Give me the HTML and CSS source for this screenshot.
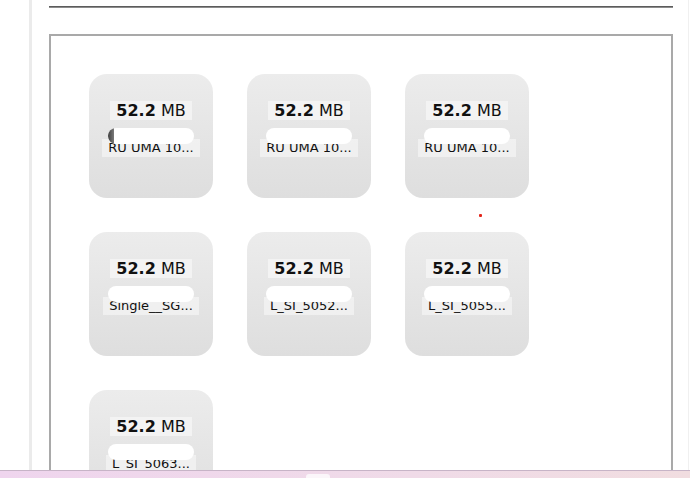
FILE: index.html
```html
<!DOCTYPE html>
<html lang="en">
<head>
  <meta charset="UTF-8">
  <title>Uploads</title>
  <meta name="viewport" content="width=device-width, initial-scale=1.0">
  <link rel="stylesheet" href="styles.css">
</head>
<body>

  <div class="page">
    <hr class="rule">

    <!-- Upload queue -->
    <div class="files">
      <div class="grid">
        <div class="tile">
          <span class="size"><b>52.2</b> MB</span>
          <div class="bar"><div class="fill" style="width: 6px"></div></div>
          <span class="name">RU UMA 10...</span>
        </div>
        <div class="tile">
          <span class="size"><b>52.2</b> MB</span>
          <div class="bar"><div class="fill" style="width: 0"></div></div>
          <span class="name">RU UMA 10...</span>
        </div>
        <div class="tile">
          <span class="size"><b>52.2</b> MB</span>
          <div class="bar"><div class="fill" style="width: 0"></div></div>
          <span class="name">RU UMA 10...</span>
        </div>
        <div class="tile">
          <span class="size"><b>52.2</b> MB</span>
          <div class="bar"><div class="fill" style="width: 0"></div></div>
          <span class="name">Single__SG...</span>
        </div>
        <div class="tile">
          <span class="size"><b>52.2</b> MB</span>
          <div class="bar"><div class="fill" style="width: 0"></div></div>
          <span class="name">L_SI_5052...</span>
        </div>
        <div class="tile">
          <span class="size"><b>52.2</b> MB</span>
          <div class="bar"><div class="fill" style="width: 0"></div></div>
          <span class="name">L_SI_5055...</span>
        </div>
        <div class="tile">
          <span class="size"><b>52.2</b> MB</span>
          <div class="bar"><div class="fill" style="width: 0"></div></div>
          <span class="name">L_SI_5063...</span>
        </div>
      </div>
    </div>
  </div>

  <span class="dot"></span>

  <!-- Taskbar -->
  <div class="taskbar"><span class="tab"></span></div>

</body>
</html>
```

FILE: styles.css
```css
body {
  margin: 0;
  padding: 0;
  font-family: "DejaVu Sans", Verdana, sans-serif;
  background: #fff;
  color: #111;
  overflow: hidden;
  height: 478px;
}

.page {
  margin: 0 1px 0 29px;
  padding: 6px 15px 0 17px;
  border-left: 3px solid #ebebeb;
  border-right: 1px solid #f0f0f0;
  height: 100%;
  box-sizing: border-box;
}

.rule {
  margin: 0;
  height: 0;
  border: none;
  border-top: 1px solid #5c5c5c;
  border-bottom: 1px solid #8c8c8c;
}

/* Upload box */
.files {
  margin-top: 26px;
  border: 2px solid #a9a9a9;
  padding: 38px;
  height: 600px;
}

.grid {
  display: grid;
  grid-template-columns: repeat(3, 124px);
  gap: 34px;
}

.tile {
  width: 124px;
  height: 124px;
  box-sizing: border-box;
  padding-top: 27px;
  border-radius: 18px;
  background: linear-gradient(to bottom, #ececec, #dedede);
  display: flex;
  flex-direction: column;
  align-items: center;
}

.size {
  font-size: 16px;
  line-height: 19px;
  padding: 0 6px;
  background: #f3f3f3;
  color: #111;
  white-space: nowrap;
}

.bar {
  position: relative;
  z-index: 1;
  width: 86px;
  height: 16px;
  margin-top: 8px;
  margin-bottom: -5px;
  border-radius: 8px;
  background: #fff;
  overflow: hidden;
}

.fill {
  height: 100%;
  border-radius: 8px 0 0 8px;
  background: linear-gradient(to right, #3f3f3f, #7a7a7a);
}

.name {
  font-size: 13px;
  line-height: 18px;
  padding: 0 6px;
  background: rgba(255, 255, 255, 0.45);
  white-space: nowrap;
}

.dot {
  position: absolute;
  left: 479px;
  top: 214px;
  width: 3px;
  height: 3px;
  background: #e3261b;
  border-radius: 1px;
}

.taskbar {
  position: fixed;
  left: 0;
  right: 0;
  bottom: 0;
  height: 7px;
  border-top: 1px solid #c7b4c7;
  background: linear-gradient(to right, #efd5ee, #f0dbe8 60%, #f1dde0);
}

.tab {
  position: absolute;
  left: 306px;
  top: 3px;
  width: 24px;
  height: 4px;
  border-radius: 3px 3px 0 0;
  background: #fbf6fa;
}
```
